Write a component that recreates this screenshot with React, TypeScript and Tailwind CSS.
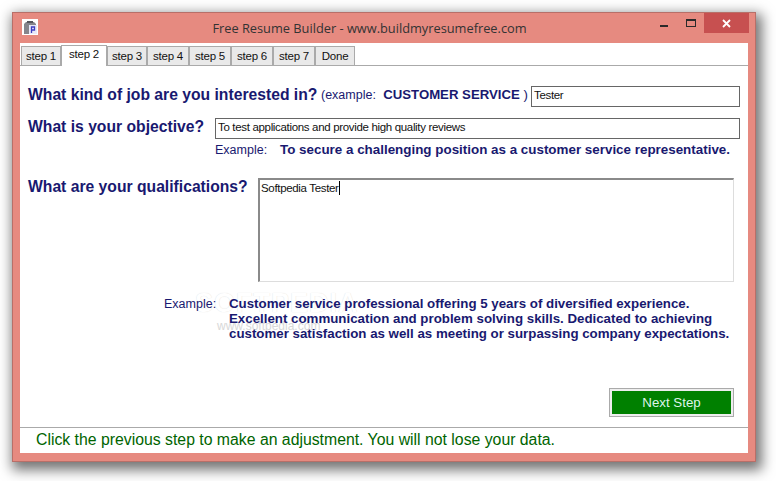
import React from 'react';

const tabs = [
  { label: 'step 1', width: 'w-[40px]' },
  { label: 'step 2', width: 'w-[46px]', active: true },
  { label: 'step 3', width: 'w-[40px]' },
  { label: 'step 4', width: 'w-[42px]' },
  { label: 'step 5', width: 'w-[42px]' },
  { label: 'step 6', width: 'w-[42px]' },
  { label: 'step 7', width: 'w-[42px]' },
  { label: 'Done', width: 'w-[40px]' },
];

const heading = 'text-[15.7px] font-bold text-[#191970] leading-[18px] whitespace-nowrap';
const inputBox = 'h-[21px] border border-[#666] bg-white pl-[2px] text-[11.5px] tracking-[-0.33px] leading-[17px] text-[#111] whitespace-nowrap';

export default function App() {
  return (
    <div className="w-[776px] h-[481px] bg-white pl-[12px] pt-[12px] overflow-hidden font-['Liberation_Sans',Arial,sans-serif]">
      {/* Window frame */}
      <div className="w-[744px] h-[450px] bg-[#e68a80] border border-[#b86f68] shadow-[3px_5px_12px_3px_rgba(0,0,0,0.55)] flex flex-col">
        {/* Title bar */}
        <div className="h-[30px] flex items-start flex-shrink-0">
          <div className="w-[16px] h-[16px] ml-[9px] mt-[6px] bg-white flex items-center justify-center">
            <svg width="15" height="15" viewBox="0 0 15 15">
              <path d="M1 4l2-2h8l2 2v10H1z" fill="#85858c" />
              <rect x="4" y="1" width="6" height="2" fill="#55555c" />
              <rect x="6" y="5" width="8" height="9" fill="#e8e8f8" />
              <path d="M8.5 7h3v3h-3zM8.5 10v3" fill="none" stroke="#3c3cc0" strokeWidth="1.3" />
            </svg>
          </div>
          <div className="flex-1 text-center text-[12.8px] leading-[18px] text-[#333] mt-[6px] font-['Open_Sans',sans-serif] pl-[50px] whitespace-nowrap">
            Free Resume Builder - www.buildmyresumefree.com
          </div>
          <div className="flex items-start">
            <div className="w-[27px] h-[20px] pt-[12px] pl-[9px]">
              <div className="w-[8px] h-[2px] bg-[#2a2a2a]" />
            </div>
            <div className="w-[26px] h-[20px] pt-[6px] pl-[8px]">
              <div className="w-[10px] h-[8px] border border-[#2a2a2a] border-t-2" />
            </div>
            <div className="w-[45px] h-[20px] bg-[#c75050] flex items-center justify-center">
              <svg width="9" height="9" viewBox="0 0 9 9">
                <path d="M1 1l7 7M8 1l-7 7" stroke="#fff" strokeWidth="1.8" fill="none" />
              </svg>
            </div>
            <div className="w-[6px]" />
          </div>
        </div>

        {/* Client area */}
        <div className="mx-[7px] w-[728px] h-[410px] bg-white flex flex-col">
          {/* Tabs */}
          <div className="h-[23px] flex items-end pl-[1px] flex-shrink-0 border-b border-[#aaa] text-[11.5px] tracking-[-0.2px] text-[#111]">
            {tabs.map((t) => (
              <div
                key={t.label}
                className={
                  t.active
                    ? `${t.width} h-[21px] -mb-px relative bg-white border border-b-0 border-[#aaa] text-center leading-[17px]`
                    : `${t.width} h-[19px] bg-[#e9e9e9] border-x border-t border-[#aaa] text-center leading-[19px]`
                }
              >
                {t.label}
              </div>
            ))}
          </div>

          {/* Step 2 form */}
          <div className="h-[361px] pl-[8px] flex flex-col flex-shrink-0">
            <div className="flex items-start mt-[20px] h-[21px]">
              <div className={`${heading} w-[293px]`}>What kind of job are you interested in?</div>
              <div className="w-[210px] text-[13.2px] leading-[18px] text-[#191970] whitespace-nowrap">
                <span className="text-[12.5px]">(example:</span>&nbsp; <span className="font-bold">CUSTOMER SERVICE</span> )
              </div>
              <div className={`${inputBox} w-[209px]`}>Tester</div>
            </div>

            <div className="flex items-start mt-[11px] h-[21px]">
              <div className={`${heading} w-[187px]`}>What is your objective?</div>
              <div className={`${inputBox} w-[525px]`}>To test applications and provide high quality reviews</div>
            </div>

            <div className="flex ml-[187px] mt-[2px] h-[18px] text-[13.4px] leading-[18px] text-[#191970] whitespace-nowrap">
              <div className="w-[65px] text-[12.5px]">Example:</div>
              <div className="font-bold">To secure a challenging position as a customer service representative.</div>
            </div>

            <div className="flex items-start mt-[19px]">
              <div className={`${heading} w-[230px]`}>What are your qualifications?</div>
              <div className="w-[476px] h-[104px] border border-[#8a8a8a] border-r-[#ddd] border-b-[#ddd] border-l-2 border-t-2 pl-[1px] pt-[1px] text-[11.5px] tracking-[-0.33px] leading-[15px] text-[#111] flex items-start">
                Softpedia Tester<span className="inline-block w-px h-[14px] bg-black" />
              </div>
            </div>

            <div className="flex ml-[136px] mt-[14px] text-[13.3px] leading-[15px] text-[#191970] relative">
              {/* Faded watermark behind the text */}
              <div className="absolute left-[31px] top-[-8px] text-[27px] leading-[30px] font-bold tracking-[1px] text-white [text-shadow:0_0_1px_#d8d8d8] whitespace-nowrap">
                SOFTPEDIA
              </div>
              <div className="absolute left-[53px] top-[23px] text-[12px] leading-[14px] text-[#d8d8d8] whitespace-nowrap">
                www.softpedia.com
              </div>
              <div className="w-[65px] text-[12.5px] pt-[1px] relative">Example:</div>
              <div className="font-bold whitespace-nowrap relative">
                Customer service professional offering 5 years of diversified experience.
                <br />
                Excellent communication and problem solving skills. Dedicated to achieving
                <br />
                customer satisfaction as well as meeting or surpassing company expectations.
              </div>
            </div>

            <div className="flex justify-end mt-[47px] pr-[14px]">
              <div className="w-[125px] h-[29px] border border-[#aaa] bg-[#eee] p-[2px]">
                <div className="w-full h-full bg-[#008000] text-center text-[13.3px] leading-[23px] text-[#dff5ea]">
                  Next Step
                </div>
              </div>
            </div>
          </div>

          {/* Status bar */}
          <div className="flex-1 border-t border-[#aaa] pl-[16px] text-[15.8px] leading-[23px] text-[#006400] whitespace-nowrap">
            Click the previous step to make an adjustment. You will not lose your data.
          </div>
        </div>
      </div>
    </div>
  );
}
